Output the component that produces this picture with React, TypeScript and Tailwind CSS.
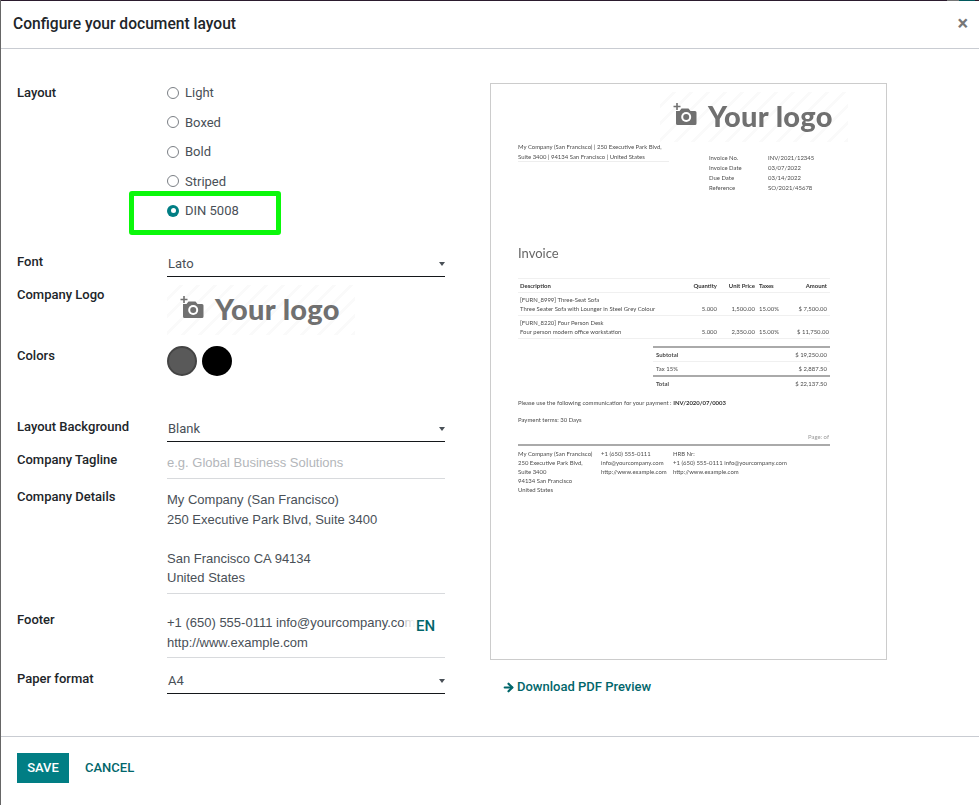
import type { ReactNode } from "react";
import { ArrowRight } from "lucide-react";

const LAYOUTS = ["Light", "Boxed", "Bold", "Striped", "DIN 5008"];

const INVOICE_INFO = [
  ["Invoice No.", "INV/2021/12345"],
  ["Invoice Date", "03/07/2022"],
  ["Due Date", "03/14/2022"],
  ["Reference", "SO/2021/45678"],
];

const LINES = [
  {
    code: "[FURN_8999] Three-Seat Sofa",
    desc: "Three Seater Sofa with Lounger in Steel Grey Colour",
    qty: "5.000",
    price: "1,500.00",
    tax: "15.00%",
    amount: "$ 7,500.00",
  },
  {
    code: "[FURN_8220] Four Person Desk",
    desc: "Four person modern office workstation",
    qty: "5.000",
    price: "2,350.00",
    tax: "15.00%",
    amount: "$ 11,750.00",
  },
];

function YourLogo() {
  return (
    <div className="flex h-[50px] w-[188px] items-center bg-[repeating-linear-gradient(135deg,#ffffff_0px,#ffffff_9px,#fafafa_9px,#fafafa_12px)] pb-[4px] pl-[13px]">
      <svg width="24" height="26" viewBox="0 0 24 26" className="shrink-0">
        <path d="M4 1v7M0.5 4.5h7" stroke="#707070" strokeWidth="1.6" fill="none" />
        <path
          d="M3 9h3.5l2-2.5h7l2 2.5H22a1.5 1.5 0 0 1 1.5 1.5v11A1.5 1.5 0 0 1 22 23H4.5A1.5 1.5 0 0 1 3 21.5Z"
          fill="#707070"
        />
        <circle cx="13.2" cy="15" r="5" fill="#ffffff" />
        <circle cx="13.2" cy="15" r="3" fill="#707070" />
      </svg>
      <span className="ml-[11px] whitespace-nowrap font-[Lato,sans-serif] text-[29px] font-black leading-none tracking-[0.3px] text-[#707070]">
        Your logo
      </span>
    </div>
  );
}

function Row({
  label,
  className,
  labelClassName = "pt-px",
  children,
}: {
  label: string;
  className: string;
  labelClassName?: string;
  children: ReactNode;
}) {
  return (
    <div className={`flex ${className}`}>
      <div className={`w-[150px] shrink-0 text-[13px] font-medium leading-5 text-[#212529] ${labelClassName}`}>
        {label}
      </div>
      <div className="min-w-0 flex-1">{children}</div>
    </div>
  );
}

function SelectBox({ value }: { value: string }) {
  return (
    <div className="flex h-[26px] items-start justify-between border-b border-[#14171a] pl-px pt-[4px] text-[13px] leading-[18px] text-[#495057]">
      <span>{value}</span>
      <span className="mt-[7px] h-0 w-0 border-x-[3.5px] border-t-[4px] border-x-transparent border-t-[#495057]" />
    </div>
  );
}

function InvoicePreview() {
  return (
    <div className="h-[577px] w-[397px] border border-[#cccccc] bg-white font-[Lato,sans-serif] text-[5.95px] leading-[9px] text-[#4d4d4d] blur-[0.3px]">
      <div className="flex justify-end pr-[38px] pt-[8px]">
        <YourLogo />
      </div>

      <div className="flex pl-[27px]">
        <div className="h-[20px] w-[151px] border-b border-[#eeeeee] leading-[10px]">
          <div className="whitespace-nowrap">My Company (San Francisco) | 250 Executive Park Blvd,</div>
          <div className="whitespace-nowrap">Suite 3400 | 94134 San Francisco | United States</div>
        </div>
        <div className="ml-[40px] mt-[11px] leading-[10px]">
          {INVOICE_INFO.map(([name, value]) => (
            <div key={name} className="flex">
              <span className="w-[59px]">{name}</span>
              <span>{value}</span>
            </div>
          ))}
        </div>
      </div>

      <div className="pl-[27px] pt-[51px] text-[13px] leading-[18px] text-[#666666]">Invoice</div>

      <div className="ml-[27px] mr-[56px] mt-[16px]">
        <div className="grid h-[15px] grid-cols-[157px_40px_38px_42px_30px] items-center border-y border-[#f0f0f0] pl-[2px] pr-[3px] font-bold text-[#333333]">
          <span>Description</span>
          <span className="text-right">Quantity</span>
          <span className="text-right">Unit Price</span>
          <span className="pl-[4px]">Taxes</span>
          <span className="text-right">Amount</span>
        </div>
        {LINES.map((line) => (
          <div
            key={line.code}
            className="grid h-[23px] grid-cols-[157px_40px_38px_42px_30px] items-end border-b border-[#f0f0f0] pb-[2px] pl-[2px] pr-[3px] last:border-b-0"
          >
            <div className="whitespace-nowrap">
              <div>{line.code}</div>
              <div>{line.desc}</div>
            </div>
            <span className="text-right">{line.qty}</span>
            <span className="text-right">{line.price}</span>
            <span className="pl-[4px]">{line.tax}</span>
            <span className="whitespace-nowrap text-right">{line.amount}</span>
          </div>
        ))}

        <div className="ml-[135px] mt-[7px]">
          <div className="flex h-[15px] items-center justify-between border-t-2 border-[#aaaaaa] pl-[3px] pr-[3px] font-bold">
            <span>Subtotal</span>
            <span className="font-normal">$ 19,250.00</span>
          </div>
          <div className="flex h-[14px] items-center justify-between border-t border-[#f0f0f0] pl-[3px] pr-[3px]">
            <span>Tax 15%</span>
            <span>$ 2,887.50</span>
          </div>
          <div className="flex h-[15px] items-center justify-between border-t-2 border-[#aaaaaa] pl-[3px] pr-[3px] font-bold">
            <span>Total</span>
            <span className="font-normal">$ 22,137.50</span>
          </div>
        </div>
      </div>

      <div className="ml-[27px] mr-[56px]">
        <div className="mt-[8px]">
          Please use the following communication for your payment : <b className="text-[#333333]">INV/2020/07/0003</b>
        </div>
        <div className="mt-[8px]">Payment terms: 30 Days</div>
        <div className="mt-[8px] pr-px text-right text-[#999999]">Page: of</div>
        <div className="mt-[3px] flex border-t-2 border-[#aaaaaa] pt-[3px]">
          <div className="w-[83px]">
            <div>My Company (San Francisco)</div>
            <div>250 Executive Park Blvd,</div>
            <div>Suite 3400</div>
            <div>94134 San Francisco</div>
            <div>United States</div>
          </div>
          <div className="w-[72px]">
            <div>+1 (650) 555-0111</div>
            <div>info@yourcompany.com</div>
            <div>http://www.example.com</div>
          </div>
          <div>
            <div>HRB Nr:</div>
            <div>+1 (650) 555-0111 info@yourcompany.com</div>
            <div>http://www.example.com</div>
          </div>
        </div>
      </div>
    </div>
  );
}

export default function App() {
  return (
    <div className="relative flex h-[805px] w-[979px] flex-col overflow-hidden border-l border-[#666666] bg-white font-[Roboto,sans-serif]">
      {/* sliver of the page behind the dialog */}
      <div className="flex h-px shrink-0 bg-[#2b1b2e]">
        <div className="w-[946px]" />
        <div className="w-[12px] bg-[#777777]" />
        <div className="w-[16px] bg-[#01585c]" />
      </div>

      <header className="flex h-[48px] shrink-0 items-center justify-between border-b border-[#c9ccd2] pl-[12px] pr-[11px]">
        <h4 className="text-[15.6px] font-medium leading-none text-[#212529]">Configure your document layout</h4>
        <span className="-mt-[3px] text-[20px] font-bold leading-none text-[#777777]">×</span>
      </header>

      <main className="flex flex-1">
        <form className="w-[444px] shrink-0 pl-[16px]">
          <Row label="Layout" className="pt-[29px]" labelClassName="pt-[5px]">
            <div className="-mb-[0.5px]">
              {LAYOUTS.map((name, i) => (
                <label key={name} className="flex h-[29.5px] items-center text-[13px] text-[#495057]">
                  {i === 4 ? (
                    <span className="flex h-[12px] w-[12px] items-center justify-center rounded-full bg-[#017e84]">
                      <span className="h-[5px] w-[5px] rounded-full bg-white" />
                    </span>
                  ) : (
                    <span className="h-[12px] w-[12px] rounded-full border border-[#7b7f85]" />
                  )}
                  <span className="ml-[6px]">{name}</span>
                </label>
              ))}
            </div>
          </Row>

          <Row label="Font" className="mt-[26px]">
            <SelectBox value="Lato" />
          </Row>

          <Row label="Company Logo" className="mt-[8px]" labelClassName="">
            <YourLogo />
          </Row>

          <Row label="Colors" className="mt-[11px]" labelClassName="">
            <div className="flex gap-[5px]">
              <span className="h-[30px] w-[30px] rounded-full border-2 border-[#444444] bg-[#595959]" />
              <span className="h-[30px] w-[30px] rounded-full bg-black" />
            </div>
          </Row>

          <Row label="Layout Background" className="mt-[40px]">
            <SelectBox value="Blank" />
          </Row>

          <Row label="Company Tagline" className="mt-[7px]">
            <div className="h-[30px] border-b border-[#d8dadd] pt-[5px] font-['Liberation_Sans',sans-serif] text-[13px] leading-[18px] text-[#b3b6ba]">
              e.g. Global Business Solutions
            </div>
          </Row>

          <Row label="Company Details" className="mt-[7px]">
            <div className="h-[108px] border-b border-[#d8dadd] pt-[4px] font-['Liberation_Sans',sans-serif] text-[13px] leading-[19.5px] text-[#495057]">
              <div>My Company (San Francisco)</div>
              <div>250 Executive Park Blvd, Suite 3400</div>
              <div>&nbsp;</div>
              <div>San Francisco CA 94134</div>
              <div>United States</div>
            </div>
          </Row>

          <Row label="Footer" className="mt-[15px]">
            <div className="relative h-[49px] border-b border-[#d8dadd] pt-[4px] font-['Liberation_Sans',sans-serif] text-[13px] leading-[20px] text-[#495057]">
              <div className="whitespace-nowrap">+1 (650) 555-0111 info@yourcompany.com</div>
              <div>http://www.example.com</div>
              <span className="absolute left-[248px] top-[8px] bg-white pl-px font-[Roboto,sans-serif] text-[15px] font-medium leading-[18px] text-[#01666b]">
                EN
              </span>
              <span className="absolute left-[237px] top-[4px] h-[20px] w-[12px] bg-gradient-to-r from-white/60 to-white" />
            </div>
          </Row>

          <Row label="Paper format" className="mt-[10px]">
            <SelectBox value="A4" />
          </Row>
        </form>

        <aside className="ml-[45px] pt-[34px]">
          <InvoicePreview />
          <a className="ml-[12px] mt-[17px] flex items-center text-[13px] font-medium leading-5 text-[#01666b]">
            <ArrowRight size={13} strokeWidth={4} className="mr-[2px]" />
            Download PDF Preview
          </a>
        </aside>
      </main>

      <footer className="flex h-[69px] shrink-0 items-start border-t border-[#c9ccd2] pl-[16px] pt-[16px]">
        <button className="h-[30px] w-[52px] bg-[#017e84] text-[13px] font-medium text-white">SAVE</button>
        <button className="ml-[16px] h-[30px] text-[13px] font-medium text-[#01666b]">CANCEL</button>
      </footer>

      {/* green highlight drawn on top of the radio list */}
      <div className="absolute left-[128px] top-[191px] h-[44px] w-[152px] rounded-[3px] border-[5px] border-[#0af80a]" />
    </div>
  );
}
